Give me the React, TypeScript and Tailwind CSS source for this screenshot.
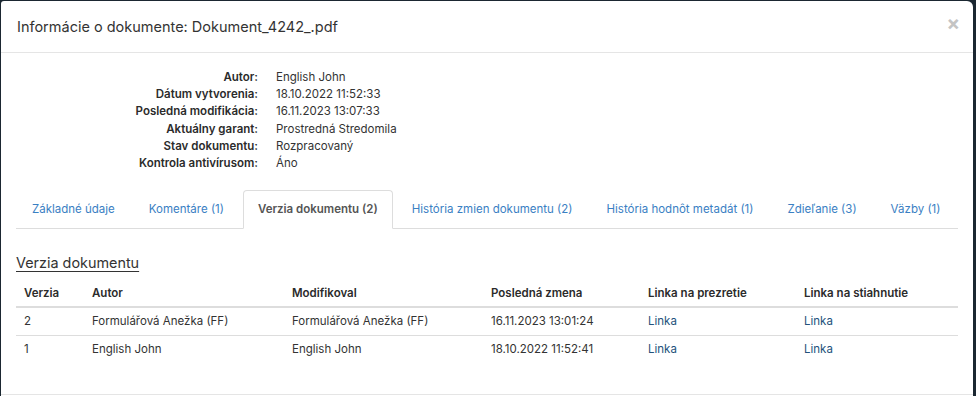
import React from 'react';

const meta = [
  { label: 'Autor:', value: 'English John' },
  { label: 'Dátum vytvorenia:', value: '18.10.2022 11:52:33' },
  { label: 'Posledná modifikácia:', value: '16.11.2023 13:07:33' },
  { label: 'Aktuálny garant:', value: 'Prostredná Stredomila' },
  { label: 'Stav dokumentu:', value: 'Rozpracovaný' },
  { label: 'Kontrola antivírusom:', value: 'Áno' },
];

const tabs = [
  { id: 'zakladne', label: 'Základné údaje' },
  { id: 'komentare', label: 'Komentáre (1)' },
  { id: 'verzia', label: 'Verzia dokumentu (2)' },
  { id: 'historia', label: 'História zmien dokumentu (2)' },
  { id: 'metadata', label: 'História hodnôt metadát (1)' },
  { id: 'zdielanie', label: 'Zdieľanie (3)' },
  { id: 'vazby', label: 'Väzby (1)' },
];

const versions = [
  { verzia: '2', autor: 'Formulářová Anežka (FF)', modifikoval: 'Formulářová Anežka (FF)', zmena: '16.11.2023 13:01:24' },
  { verzia: '1', autor: 'English John', modifikoval: 'English John', zmena: '18.10.2022 11:52:41' },
];

const cols = 'grid grid-cols-[68px_200px_199px_157px_156px_1fr]';

const App = () => {
  const activeTab = 'verzia';

  return (
    <div className="w-[976px] h-[396px] overflow-hidden bg-[#1b2731] pt-[1px] pl-[1px] font-['Inter','Liberation_Sans',sans-serif] text-[#333]">
      <div className="w-[972px] h-[400px] bg-white rounded-tl-[3px] rounded-tr-[6px]">
        {/* Header */}
        <div className="h-[52px] border-b border-[#e5e5e5] flex items-center justify-between pl-[16px] pr-[13px]">
          <h4 className="text-[14.5px] text-[#333]">Informácie o dokumente: Dokument_4242_.pdf</h4>
          <span className="text-[20px] leading-none text-[#c4c4c4] font-bold -mt-[7px]">×</span>
        </div>

        {/* Body */}
        <div className="px-[15px] pt-[16px] h-[342px] border-b border-[#e5e5e5]">
          <div className="grid grid-cols-[242px_1fr] gap-x-[18px] text-[11.5px] leading-[17.2px]">
            {meta.map((m) => (
              <React.Fragment key={m.label}>
                <div className="text-right font-semibold text-[#2b2b2b]">{m.label}</div>
                <div>{m.value}</div>
              </React.Fragment>
            ))}
          </div>

          {/* Tabs */}
          <div className="mt-[18px] flex gap-[4px] border-b border-[#ddd] pl-[1px] text-[11.5px]">
            {tabs.map((tab) => (
              <div
                key={tab.id}
                className={`flex-none whitespace-nowrap px-[14px] py-[10px] leading-[17px] -mb-[1px] rounded-t-[4px] border ${
                  activeTab === tab.id
                    ? 'bg-white border-[#ddd] border-b-white text-[#555] font-semibold'
                    : 'border-transparent text-[#3a80c3]'
                }`}
              >
                {tab.label}
              </div>
            ))}
          </div>

          {/* Versions */}
          <h3 className="mt-[24px] text-[14.4px] leading-[20px] underline underline-offset-[3px]">Verzia dokumentu</h3>

          <div className="mt-[7px] text-[11.5px]">
            <div className={`${cols} border-b-2 border-[#ddd] font-semibold leading-[18px] text-[#2b2b2b]`}>
              <div className="px-[8px] py-[4px]">Verzia</div>
              <div className="px-[8px] py-[4px]">Autor</div>
              <div className="px-[8px] py-[4px]">Modifikoval</div>
              <div className="px-[8px] py-[4px]">Posledná zmena</div>
              <div className="px-[8px] py-[4px]">Linka na prezretie</div>
              <div className="px-[8px] py-[4px]">Linka na stiahnutie</div>
            </div>
            {versions.map((v, i) => (
              <div key={v.verzia} className={`${cols} leading-[17px] ${i > 0 ? 'border-t border-[#ddd]' : ''}`}>
                <div className="px-[8px] py-[5px]">{v.verzia}</div>
                <div className="px-[8px] py-[5px]">{v.autor}</div>
                <div className="px-[8px] py-[5px]">{v.modifikoval}</div>
                <div className="px-[8px] py-[5px]">{v.zmena}</div>
                <div className="px-[8px] py-[5px] text-[#23527c]">Linka</div>
                <div className="px-[8px] py-[5px] text-[#23527c]">Linka</div>
              </div>
            ))}
          </div>
        </div>
      </div>
    </div>
  );
};

export default App;
